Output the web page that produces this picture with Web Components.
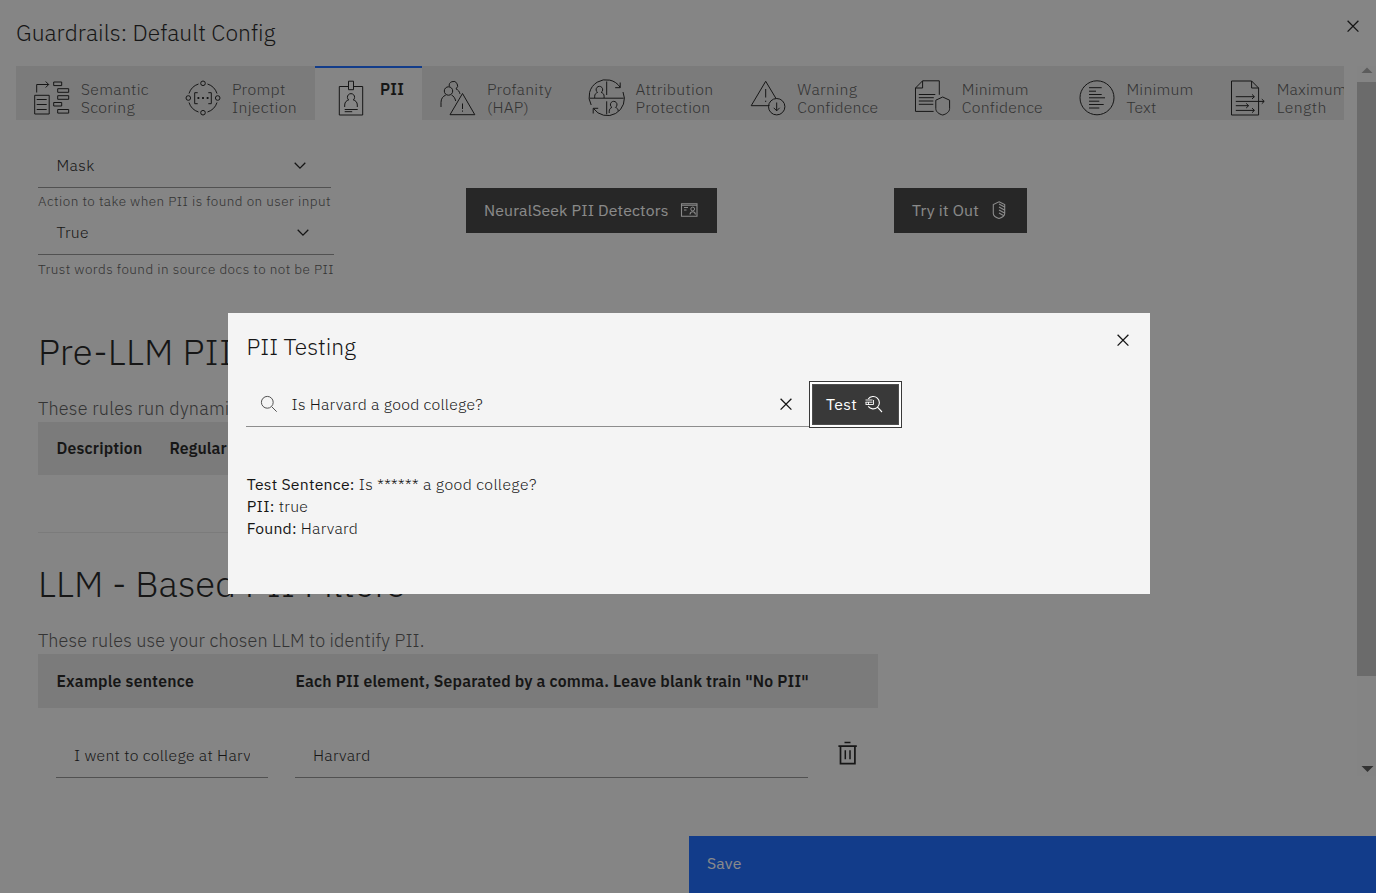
<!DOCTYPE html>
<html lang="en">
<head>
<meta charset="utf-8">
<title>Guardrails</title>
<style>
html,body{margin:0;height:100%;overflow:hidden}
body{font:300 15.75px/18px "IBM Plex Sans",Roboto,"Open Sans",sans-serif;color:#161616;background:#f4f4f4}
</style>
</head>
<body>
<guardrails-app></guardrails-app>
<script>
const ICONS = {
  semantic: '<path transform="translate(-.8 0)" d="M3.5 12.5v-8h12M12.5 1.5l3 3-3 3M1.500 15.300H16V34H1.500zM3.500 19.500h10M3.500 24.500h10M3.500 29.500h10M20.500 2h8v3.600h-8zM24.500 8.700h11v3.600h-11zM24.500 15.700h11v3.600h-11zM20.500 22.500h8V26h-8zM24.500 29.500h11v3.600h-11z"/>',
  prompt: '<circle cx="18" cy="3.3" r="2.3"/><circle cx="18" cy="32.7" r="2.3"/><circle cx="3.3" cy="18" r="2.3"/><circle cx="32.7" cy="18" r="2.3"/><path d="M22.5 4A14.8 14.8 0 0 1 32 13.5M32 22.5a14.8 14.8 0 0 1-9.5 9.5M13.5 32A14.8 14.8 0 0 1 4 22.5M4 13.5A14.8 14.8 0 0 1 13.5 4M12.7 12.7h-3v11h3M23.3 12.7h3v11h-3"/><path stroke-width="1.8" d="M12.5 18h1.8M17.1 18h1.8M21.7 18h1.8"/>',
  badge: '<path d="M15.3 6.5h-9V35h23.4V6.5h-9.4M15.5 1.2h5v8.5h-5zM11.7 27v-2c0-3 2-4.6 4-5a3.6 3.6 0 1 1 4.600 0c2 .4 4 2 4 5v2M11.7 29.5h13M11.7 31.7h7.5"/>',
  hap: '<circle cx="8.5" cy="11" r="4.2"/><path d="M9.3 6.500a4.200 4.200 0 1 1 6.700 2.400c2.300 1 3.400 2.600 4 5M1 27v-4.500c0-4 2-6.200 4.800-7.500M11.500 15c2 .9 3.500 3 4.200 6M22.500 13.500L10 34.700h24.800zM22.500 23.500V29M22.500 30.500v1.200"/>',
  attribution: '<path transform="translate(-.3 0)" d="M2.500 25A17 17 0 0 1 31.500 7.300M31.500 2.500v5.200h-5M34.300 12A17 17 0 0 1 4.800 28.500M4.500 33.500v-5.200h5M1 18.200h34M18 1.500V15M18 21.300v13M6 18v-1.800c0-2 1.300-3.200 2.900-3.800a3.300 3.300 0 1 1 3.600 0c1.700.6 2.900 1.800 2.900 3.800V18M20.500 33v-1.800c0-2 1.200-3.200 2.700-3.800a3.300 3.300 0 1 1 3.600 0c1.600.6 2.700 1.800 2.700 3.500"/>',
  warning: '<path d="M19.500 25.700H1.200L15.700 1.300l10.500 17.500M15.700 9v8.500M15.700 20.700V22M26.700 22.500v8.300M23.700 27.800l3 3 3-3"/><circle cx="26.700" cy="26.700" r="8.200"/>',
  docshield: '<path transform="translate(-.7 0)" d="M19.300 31.400H1.200V8L8.300.8H25v14M8.300.8V8H1.200M4.500 14.500H21M4.500 17.700h15M4.500 21h14.500M4.500 24.300h14.500M28.400 17l6.900 3.200v8.300c0 3.200-3 5.500-6.900 6.500-4-1-6.900-3.300-6.900-6.500v-8.300z"/>',
  mintext: '<circle cx="18" cy="17.800" r="17"/><path d="M10 7.700h12.700M10 11.200h7M10 14.500h12.700M10 17.800h16M10 21.200h10.300M10 24.500h14.700M10 28h10.300"/>',
  maxlength: '<path transform="translate(-.7 0)" d="M22.300 1H2.200v34h27.100V8zV8h7M6.500 16.700H25M22.700 14.400l2.400 2.300-2.400 2.300M6.500 21.400h28.300M32.500 19.100l2.400 2.300-2.400 2.300M6.500 25.700h12.700M16.900 23.400l2.400 2.300-2.400 2.300M6.500 30.400H25M22.700 28.100l2.400 2.300-2.400 2.300"/>',
  close: '<path stroke-width="1.300" d="M3.600 3.800l10.800 10.800M14.400 3.800L3.600 14.600"/>',
  chevron: '<path stroke-width="1.300" d="M3.700 6.800L9 12.100l5.300-5.300"/>',
  search: '<circle cx="7.300" cy="7.300" r="5.900"/><path d="M11.700 11.700l5 5"/>',
  idcard: '<path stroke-width="1.100" d="M.5 2.700h15.500v12.600H.5zM.5 4.200H16M3 6.500h4M3 9h2.500M9 13.500c.2-2 1.300-2.800 2.700-2.800s2.500.8 2.700 2.800"/><circle cx="11.700" cy="8" r="1.900"/>',
  shield: '<path stroke-width="1.100" d="M8 .8l5.700 2.700v9c0 2.500-2.700 4-5.700 5-3-1-5.700-2.500-5.700-5v-9zM8 3l5.500 3M8 6l5.500 3M8 9l5.500 3M8 12l4.500 2.500"/>',
  testing: '<path stroke-width="1.100" d="M3.200 4a6.200 6.200 0 1 1 0 7.400M12.500 12.200l4.500 4.800"/><path stroke-width=".9" d="M.5 5h7M.5 7.200h7M1 9.500h7.500V5M1 7v3M3.500 7v3"/>',
  trash: '<path stroke-width="1.700" d="M8.500 1.500h6M2.400 5.200h18.400M4.500 5.500V22.600h14.400V5.500"/><path stroke-width="1.500" d="M9.300 9.300v9M14 9.300v9"/>',
};
const define = (name, html, setup) => {
  const t = document.createElement('template');
  t.innerHTML = html;
  customElements.define(name, class extends HTMLElement {
    constructor() { super(); this.attachShadow({mode: 'open'}).append(t.content.cloneNode(true)); }
    connectedCallback() { if (setup) setup(this, this.shadowRoot); }
  });
};

define('g-tab', `<style>
:host{display:flex;flex:none;box-sizing:border-box;height:54px;padding:14px 18px 0;gap:11px;background:#e0e0e0;color:#525252}
g-icon{color:#161616}
.t{display:flex;flex-direction:column}
:host([active]){background:#f4f4f4;border-top:2px solid #0f62fe;padding-top:12px;color:#161616;font-weight:600}
</style><g-icon size="36"></g-icon><div class="t"><slot></slot></div>`, (el, r) => {
  r.querySelector('g-icon').setAttribute('name', el.getAttribute('icon'));
});

define('g-select', `<style>
:host{display:block;height:67px}
.box{display:flex;align-items:center;justify-content:space-between;height:44px;border-bottom:1px solid #8d8d8d;padding:0 22px 0 18.400px}
.help{font-size:13.500px;line-height:18px;padding-top:var(--help-gap,4px);color:#525252;white-space:nowrap}
</style><div class="box"><slot></slot><g-icon name="chevron"></g-icon></div><div class="help"><slot name="help"></slot></div>`);

define('g-button', `<style>
:host{display:flex;box-sizing:border-box;height:45px;align-items:center;justify-content:space-between;padding:0 18px 2px;background:#393939;color:#fff;font-weight:400}
</style><slot></slot><slot name="icon"></slot>`);

define('g-thead', `<style>
:host{display:grid;box-sizing:border-box;align-items:center;height:54px;padding:0 18.400px;background:#e0e0e0;font-weight:600}
</style><slot></slot>`);

define('g-field', `<style>
:host{display:flex;box-sizing:border-box;align-items:center;height:45px;padding:0 18px;border-bottom:1px solid #8d8d8d}
.v{overflow:hidden;white-space:nowrap}
</style><div class="v"><slot></slot></div>`);

define('g-scrollbar', `<style>
:host{display:flex;flex-direction:column;justify-content:space-between;align-items:center;width:19px;height:710px;background:#f3f3f3}
svg{display:block;flex:none}
.thumb{width:19px;height:594px;background:#c1c1c1}
.space{flex:1}
</style><svg width="19" height="16"><path d="M4.500 7l5.500-5.500L15.500 7z" fill="#a3a3a3"/></svg><div class="thumb"></div><div class="space"></div><svg width="19" height="16"><path d="M4.500 6h12l-6 6z" fill="#505050"/></svg>`);

define('g-modal', `<style>
:host{display:block;box-sizing:border-box;width:922px;height:281px;background:#f4f4f4;padding:0 18px}
header{display:flex;justify-content:space-between;height:69px;box-sizing:border-box;padding:20px 0 0 .6px;font-size:22.800px;line-height:28px}
header fit-text{align-self:flex-start}
header g-icon{margin-top:-2px}
.row{display:flex;height:45px}
.search{display:flex;box-sizing:border-box;align-items:center;width:563px;border-bottom:1px solid #8d8d8d;padding:0 14px 0 14px}
.search .q{flex:1;padding-left:13.500px}
.search>g-icon:first-of-type{color:#525252}
.btn{display:flex;box-sizing:border-box;border:1px solid #393939;padding:2px;background:#fff;width:93px;height:47px;margin-top:-1px}
.btn g-button{height:41px;width:87px;padding:0 16px 1px 14px;box-shadow:inset 0 0 0 1px #4d4d4d}
.out{padding:46px 0 0 .7px;line-height:22px}
b{font-weight:400}
.line{display:flex;gap:4px;height:22px}
</style>
<header><fit-text w="109.500">PII Testing</fit-text><g-icon name="close"></g-icon></header>
<div class="row"><div class="search"><g-icon name="search"></g-icon><div class="q"><fit-text w="191.500">Is Harvard a good college?</fit-text></div><g-icon name="close"></g-icon></div>
<div class="btn"><g-button><fit-text w="31">Test</fit-text><g-icon slot="icon" name="testing"></g-icon></g-button></div></div>
<div class="out">
<div class="line"><b><fit-text w="108">Test Sentence:</fit-text></b><fit-text w="178">Is ****** a good college?</fit-text></div>
<div class="line"><b><fit-text w="28">PII:</fit-text></b><fit-text w="29.500">true</fit-text></div>
<div class="line"><b><fit-text w="50">Found:</fit-text></b><fit-text w="57.500">Harvard</fit-text></div>
</div>`);

define('guardrails-app', `<style>
:host{display:block;height:893px;overflow:hidden;position:relative}
.page{display:flex;flex-direction:column;height:893px}
header{display:flex;justify-content:space-between;height:66px;box-sizing:border-box;padding:19px 14px 0 16px;font-size:22.800px;line-height:28px}
header fit-text{align-self:flex-start}
header g-icon{margin-top:-2px}
.body{display:flex;justify-content:space-between;height:714px}
main{width:1328px;margin-left:16px;overflow:hidden}
.tabs{display:flex;overflow:hidden;height:54px;background:#e0e0e0}
.content{padding-left:22px}
.actions{display:grid;grid-template-columns:428px 428px 1fr;height:186px;box-sizing:border-box;padding-top:23px;align-items:start}
.actions g-button{margin-top:45px}
h2{margin:0 0 21px;font-size:36.500px;font-weight:300;line-height:46px;height:46px}
p{margin:0;font-size:18px;line-height:26px;color:#525252}
.first{padding-top:23px}
.first g-thead{grid-template-columns:113px 1fr;width:840px;height:53px;padding-bottom:1px}
hr{border:0;border-top:1px solid #e0e0e0;margin:57px 0 28px;width:840px}
.second g-thead{grid-template-columns:239px 1fr;width:840px}
.row{display:grid;grid-template-columns:212px 513px 24px;column-gap:27px;padding:25px 0 0 18px}
.row g-icon{margin:8px 0 0 1px}
footer{margin-top:56px;margin-left:689px;height:57px;background:#0f62fe;color:#fff;display:flex;align-items:center;padding:0 0 3px 18px;box-sizing:border-box;font-weight:400}
.scrim{position:absolute;inset:0;background:rgba(22,22,22,.5);display:grid;justify-content:start;align-content:start;padding:313px 0 0 228px}
</style>
<div class="page">
<header><fit-text w="259.500">Guardrails: Default Config</fit-text><g-icon name="close"></g-icon></header>
<div class="body"><main>
<div class="tabs">
<g-tab icon="semantic" style="width:151px"><fit-text w="68">Semantic</fit-text><fit-text w="54">Scoring</fit-text></g-tab>
<g-tab icon="prompt" style="width:148px"><fit-text w="53.500">Prompt</fit-text><fit-text w="65">Injection</fit-text></g-tab>
<g-tab icon="badge" active style="width:107px"><fit-text w="24">PII</fit-text></g-tab>
<g-tab icon="hap" style="width:148.500px"><fit-text w="65">Profanity</fit-text><fit-text w="42">(HAP)</fit-text></g-tab>
<g-tab icon="attribution" style="width:161.800px"><fit-text w="78">Attribution</fit-text><fit-text w="75">Protection</fit-text></g-tab>
<g-tab icon="warning" style="width:164.500px"><fit-text w="60">Warning</fit-text><fit-text w="81">Confidence</fit-text></g-tab>
<g-tab icon="docshield" style="width:164.700px"><fit-text w="67">Minimum</fit-text><fit-text w="81">Confidence</fit-text></g-tab>
<g-tab icon="mintext" style="width:150.200px"><fit-text w="67">Minimum</fit-text><fit-text w="30">Text</fit-text></g-tab>
<g-tab icon="maxlength" style="width:160px"><fit-text w="70">Maximum</fit-text><fit-text w="50">Length</fit-text></g-tab>
</div>
<div class="content">
<div class="actions">
<div>
<g-select style="width:293px"><fit-text w="38.500">Mask</fit-text><fit-text slot="help" w="293">Action to take when PII is found on user input</fit-text></g-select>
<g-select style="width:295.500px;--help-gap:5px"><fit-text w="32.500">True</fit-text><fit-text slot="help" w="296">Trust words found in source docs to not be PII</fit-text></g-select>
</div>
<g-button style="width:251px"><fit-text w="184.500">NeuralSeek PII Detectors</fit-text><g-icon slot="icon" name="idcard"></g-icon></g-button>
<g-button style="width:133px"><fit-text w="67">Try it Out</fit-text><g-icon slot="icon" name="shield"></g-icon></g-button>
</div>
<section class="first">
<h2><fit-text w="306">Pre-LLM PII Filters</fit-text></h2>
<p><fit-text w="229">These rules run dynamically</fit-text></p>
<g-thead><fit-text w="86">Description</fit-text><fit-text w="57.500">Regular</fit-text></g-thead>
</section>
<hr>
<section class="second">
<h2><fit-text w="367">LLM - Based PII Filters</fit-text></h2>
<p><fit-text w="386.500">These rules use your chosen LLM to identify PII.</fit-text></p>
<g-thead><fit-text w="137.500">Example sentence</fit-text><fit-text w="513.500">Each PII element, Separated by a comma. Leave blank train "No PII"</fit-text></g-thead>
<div class="row"><g-field><fit-text w="177">I went to college at Harv</fit-text></g-field><g-field><fit-text w="57.500">Harvard</fit-text></g-field><g-icon name="trash" size="24"></g-icon></div>
</section>
</div>
</main><g-scrollbar></g-scrollbar></div>
<footer><fit-text w="34.500">Save</fit-text></footer>
</div>
<div class="scrim"><g-modal></g-modal></div>`);

define('g-icon', '<style>:host{display:block;flex:none}svg{display:block;overflow:visible;fill:none;stroke:currentColor}</style><svg></svg>', (el, r) => {
  const s = +(el.getAttribute('size') || 18), v = r.querySelector('svg');
  v.setAttribute('width', s); v.setAttribute('height', s); v.setAttribute('viewBox', `0 0 ${s} ${s}`);
  v.innerHTML = ICONS[el.getAttribute('name')];
});

/* Tracks its text out or in to the width given in "w". */
define('fit-text', '<style>:host{display:inline-block;white-space:pre;justify-self:start;align-self:center}:host-context(g-tab){align-self:flex-start}</style><slot></slot>', el => {
  const s = getComputedStyle(el), c = document.createElement('canvas').getContext('2d'), t = el.textContent;
  c.font = `${s.fontWeight} ${s.fontSize} ${s.fontFamily}`;
  const ls = (el.getAttribute('w') - c.measureText(t).width) / t.length;
  el.style.letterSpacing = ls.toFixed(3) + 'px';
});
</script>
</body>
</html>
